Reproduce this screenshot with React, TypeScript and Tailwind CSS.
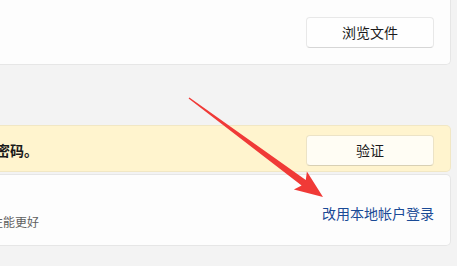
import React from 'react';

const FONT = { fontFamily: '"Noto Sans CJK SC", "Noto Sans", sans-serif' };

export default function App() {
  return (
    <div className="relative w-[457px] h-[266px] overflow-hidden bg-[#f3f3f3]" style={FONT}>
      {/* Top card */}
      <div className="w-[451px] h-[65px] bg-[#fdfdfd] border-b border-r border-[#e6e6e6] rounded-br-[5px] flex items-center justify-end pr-[16px]">
        <button className="w-[128px] h-[31px] bg-[#fefefe] border border-[#e8e8e8] border-b-[#d6d6d6] rounded-[4px] text-[14px] text-[#1b1b1b]">
          浏览文件
        </button>
      </div>

      {/* Warning card */}
      <div className="mt-[60px] w-[451px] h-[47px] bg-[#fff4ce] border-y border-r border-[#f1e7c4] rounded-r-[5px] flex items-center justify-between pr-[16px]">
        <span className="ml-[-4px] text-[14px] font-semibold text-[#1a1a1a] pt-[3px]">密码。</span>
        <button className="mt-[3px] w-[128px] h-[31px] bg-[#fffdf4] border border-[#ece3c6] border-b-[#d8d0b4] rounded-[4px] text-[14px] text-[#1b1b1b]">
          验证
        </button>
      </div>

      {/* Account card */}
      <div className="mt-[2px] w-[451px] h-[72px] bg-[#fdfdfd] border-y border-r border-[#e6e6e6] rounded-r-[5px] flex items-center justify-between pr-[16px]">
        <span className="ml-[-9px] mt-[24px] text-[12px] text-[#5f5f5f]">性能更好</span>
        <span className="mt-[6px] text-[14px] text-[#1a4a96]">改用本地帐户登录</span>
      </div>

      {/* Red annotation arrow */}
      <svg className="absolute left-0 top-0" width="457" height="266" viewBox="0 0 457 266">
        <polygon
          fill="#f03a37"
          points="189.4,97.4 305.8,180.0 306.9,171.6 323,197 293.9,189.4 301.6,185.6 188.6,98.6"
        />
      </svg>
    </div>
  );
}
